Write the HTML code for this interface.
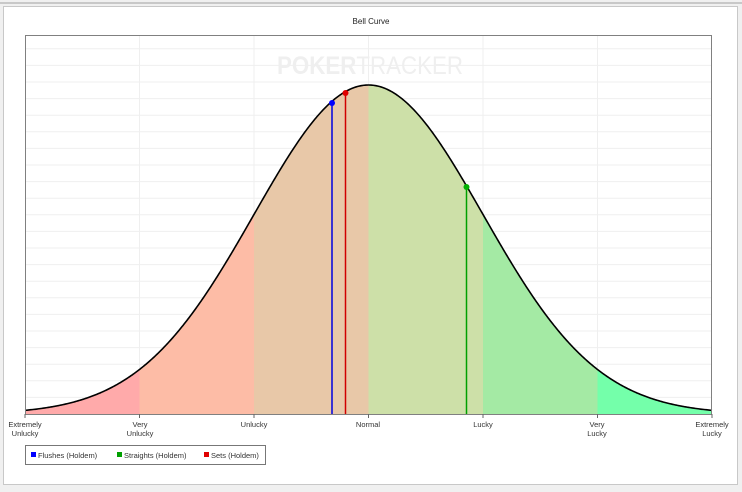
<!DOCTYPE html>
<html><head><style>
body{margin:0;background:#f0f0f0;width:742px;height:492px;overflow:hidden;font-family:"Liberation Sans",Arial,sans-serif}
</style></head><body>
<svg id="s" width="742" height="492" xmlns="http://www.w3.org/2000/svg" style="position:absolute;left:0;top:0">
<rect x="0" y="0" width="742" height="492" fill="#f0f0f0"/>
<line x1="0" y1="3" x2="742" y2="3" stroke="#a0a0a0"/>
<rect x="3.5" y="6.5" width="734" height="478" fill="#fff" stroke="#c8c8c8"/>
<text x="371" y="24" font-size="8" text-anchor="middle" fill="#222" font-family="Liberation Sans">Bell Curve</text>
<g id="grid"></g>
<g id="bands"></g>
<text x="370" y="74" font-size="25" text-anchor="middle" fill="#efefef" font-weight="bold" font-family="Liberation Sans" textLength="186" lengthAdjust="spacingAndGlyphs">POKER<tspan font-weight="normal">TRACKER</tspan></text>
<path id="curve" fill="none" stroke="#000" stroke-width="1.6"/>
<line x1="332" y1="101" x2="332" y2="414" stroke="#0000e0" stroke-width="1.5"/>
<line x1="345.5" y1="93" x2="345.5" y2="414" stroke="#d00000" stroke-width="1.5"/>
<line x1="466.5" y1="187" x2="466.5" y2="414" stroke="#00a000" stroke-width="1.5"/>
<circle cx="332" cy="103" r="3" fill="#0000ff"/>
<circle cx="345.5" cy="93" r="3" fill="#e00000"/>
<circle cx="466.5" cy="187" r="3" fill="#00b000"/>
<rect x="25.5" y="35.5" width="686" height="379" fill="none" stroke="#808080"/>
<g font-size="7.5" fill="#333" text-anchor="middle" font-family="Liberation Sans">
<text x="25" y="427">Extremely</text><text x="25" y="436">Unlucky</text>
<text x="140" y="427">Very</text><text x="140" y="436">Unlucky</text>
<text x="254" y="427">Unlucky</text>
<text x="368" y="427">Normal</text>
<text x="483" y="427">Lucky</text>
<text x="597" y="427">Very</text><text x="597" y="436">Lucky</text>
<text x="712" y="427">Extremely</text><text x="712" y="436">Lucky</text>
</g>
<rect x="25.5" y="445.5" width="240" height="19" fill="#fff" stroke="#777"/>
<g font-size="7.5" fill="#333" font-family="Liberation Sans">
<rect x="31" y="452" width="5" height="5" fill="#0000ff"/><text x="38" y="458">Flushes (Holdem)</text>
<rect x="117" y="452" width="5" height="5" fill="#00a000"/><text x="124" y="458">Straights (Holdem)</text>
<rect x="204" y="452" width="5" height="5" fill="#e00000"/><text x="211" y="458">Sets (Holdem)</text>
</g>
</svg>
<script>
var ns="http://www.w3.org/2000/svg",s=document.getElementById('s');
function el(t,a,p){var e=document.createElementNS(ns,t);for(var k in a)e.setAttribute(k,a[k]);p.appendChild(e);return e;}
var g=document.getElementById('grid');
for(var y=414-16.6;y>36;y-=16.6)el('line',{x1:26,x2:711,y1:y,y2:y,stroke:'#efefef'},g);
var xs=[25,139.5,254,368.5,483,597.5,712];
for(var i=1;i<6;i++){el('line',{x1:xs[i],x2:xs[i],y1:36,y2:414,stroke:'#efefef'},g);el('line',{x1:xs[i],x2:xs[i],y1:414,y2:418,stroke:'#666'},s);}
el('line',{x1:25,x2:25,y1:414,y2:418,stroke:'#666'},s);el('line',{x1:712,x2:712,y1:414,y2:418,stroke:'#666'},s);
function Y(x){var z=(x-368.5)/114.5;return 414-329*Math.exp(-z*z/2);}
var cols=['#ffaaaa','#fdbca6','#e8c8a8','#cde0a8','#a4eaa4','#74ffaa'];
var b=document.getElementById('bands');
for(var i=0;i<6;i++){var d='M'+xs[i]+',414';for(var x=xs[i];x<=xs[i+1]+0.01;x+=1)d+=' L'+x+','+Y(x).toFixed(2);d+=' L'+xs[i+1]+','+Y(xs[i+1]).toFixed(2)+' L'+xs[i+1]+',414Z';el('path',{d:d,fill:cols[i]},b);}
var d='M25,'+Y(25);for(var x=26;x<=712;x++)d+=' L'+x+','+Y(x).toFixed(2);
document.getElementById('curve').setAttribute('d',d);
</script>
</body></html>
